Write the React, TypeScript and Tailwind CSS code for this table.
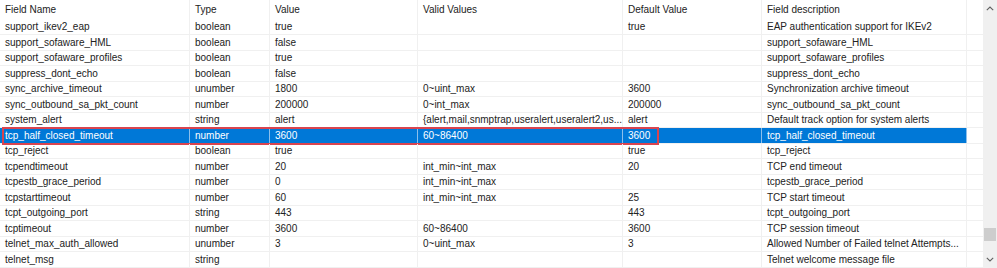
import React from "react";

type Row = [string, string, string, string, string, string];

const columns = [
  { title: "Field Name", w: "w-[190px]" },
  { title: "Type", w: "w-[80px]" },
  { title: "Value", w: "w-[148px]" },
  { title: "Valid Values", w: "w-[205px]" },
  { title: "Default Value", w: "w-[139px]" },
  { title: "Field description", w: "w-[205px]" },
];

const rows: Row[] = [
  ["support_ikev2_eap", "boolean", "true", "", "true", "EAP authentication support for IKEv2"],
  ["support_sofaware_HML", "boolean", "false", "", "", "support_sofaware_HML"],
  ["support_sofaware_profiles", "boolean", "true", "", "", "support_sofaware_profiles"],
  ["suppress_dont_echo", "boolean", "false", "", "", "suppress_dont_echo"],
  ["sync_archive_timeout", "unumber", "1800", "0~uint_max", "3600", "Synchronization archive timeout"],
  ["sync_outbound_sa_pkt_count", "number", "200000", "0~int_max", "200000", "sync_outbound_sa_pkt_count"],
  ["system_alert", "string", "alert", "{alert,mail,snmptrap,useralert,useralert2,us...", "alert", "Default track option for system alerts"],
  ["tcp_half_closed_timeout", "number", "3600", "60~86400", "3600", "tcp_half_closed_timeout"],
  ["tcp_reject", "boolean", "true", "", "true", "tcp_reject"],
  ["tcpendtimeout", "number", "20", "int_min~int_max", "20", "TCP end timeout"],
  ["tcpestb_grace_period", "number", "0", "int_min~int_max", "", "tcpestb_grace_period"],
  ["tcpstarttimeout", "number", "60", "int_min~int_max", "25", "TCP start timeout"],
  ["tcpt_outgoing_port", "string", "443", "", "443", "tcpt_outgoing_port"],
  ["tcptimeout", "number", "3600", "60~86400", "3600", "TCP session timeout"],
  ["telnet_max_auth_allowed", "unumber", "3", "0~uint_max", "3", "Allowed Number of Failed telnet Attempts..."],
  ["telnet_msg", "string", "", "", "", "Telnet welcome message file"],
];

const SELECTED = 7;

const Chevron: React.FC<{ up?: boolean }> = ({ up }) => (
  <svg width="8" height="5" viewBox="0 0 8 5" className={up ? "" : "rotate-180"}>
    <path d="M0.8 4.2 L4 1 L7.2 4.2" fill="none" stroke="#606060" strokeWidth="1.1" />
  </svg>
);

const App: React.FC = () => {
  return (
    <div className="flex w-[997px] h-[268px] overflow-hidden bg-white text-[10px] text-[#222] font-['Liberation_Sans',Arial,sans-serif]">
      <div className="flex flex-col w-[983px]">
        {/* header */}
        <div className="flex h-[19.5px] shrink-0">
          {columns.map((c) => (
            <div
              key={c.title}
              className={`${c.w} shrink-0 flex items-center pl-[5px] border-r border-[#f0f0f0] whitespace-nowrap`}
            >
              {c.title}
            </div>
          ))}
          <div className="flex-1" />
        </div>

        {rows.map((r, i) => {
          const sel = i === SELECTED;
          return (
            <div
              key={r[0]}
              className={`relative flex h-[15.5px] shrink-0 border-b border-[#f0f0f0] ${sel ? "text-white" : ""}`}
            >
              {r.map((cell, j) => (
                <div
                  key={j}
                  className={`${columns[j].w} shrink-0 flex items-center pl-[5px] border-r whitespace-nowrap overflow-hidden ${
                    sel ? "bg-[#0078d7] border-[#8cbfeb]" : "border-[#f0f0f0]"
                  }`}
                >
                  {cell}
                </div>
              ))}
              <div className="flex-1" />
              {sel && (
                <span className="absolute left-[2px] top-[-1.5px] w-[657px] h-[18.5px] border-2 border-[#d9444f] pointer-events-none" />
              )}
            </div>
          );
        })}
      </div>

      {/* scrollbar */}
      <div className="flex flex-col w-[14px] bg-[#f0f0f0]">
        <div className="h-[17px] flex items-center justify-center">
          <Chevron up />
        </div>
        <div className="flex-1" />
        <div className="h-[13px] mx-[1px] bg-[#cdcdcd]" />
        <div className="h-[10px]" />
        <div className="h-[17px] flex items-center justify-center">
          <Chevron />
        </div>
      </div>
    </div>
  );
};

export default App;
